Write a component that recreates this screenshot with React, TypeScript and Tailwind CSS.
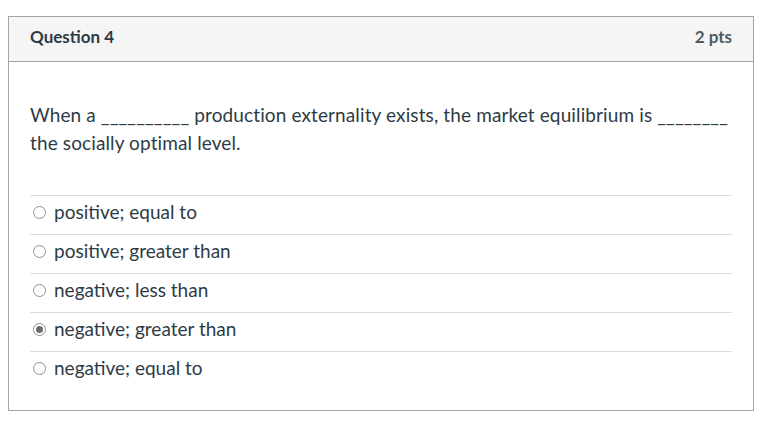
import React from "react";

const answers = [
  { label: "positive; equal to", checked: false },
  { label: "positive; greater than", checked: false },
  { label: "negative; less than", checked: false },
  { label: "negative; greater than", checked: true },
  { label: "negative; equal to", checked: false },
];

const Radio = ({ checked }: { checked: boolean }) => (
  <span className="w-[13px] h-[13px] rounded-full border border-[#909090] bg-white flex items-center justify-center shrink-0">
    {checked && <span className="w-[7px] h-[7px] rounded-full bg-[#6b6b6b]" />}
  </span>
);

export default function App() {
  return (
    <div className="w-[773px] h-[430px] bg-white pt-4 px-2 font-['Lato','Liberation_Sans',sans-serif] text-[#2d3b45]">
      <div className="w-[746px] h-[395px] border border-[#a5a5a5] flex flex-col">
        {/* Header */}
        <div className="h-[45px] bg-[#f5f5f5] border-b border-[#a5a5a5] flex items-center justify-between px-[21px] pb-[4px]">
          <h2 className="text-[17px] font-bold">Question 4</h2>
          <span className="text-[17px] font-bold text-[#4e5a63]">2 pts</span>
        </div>

        {/* Body */}
        <div className="px-[21px] pt-[39px]">
          <p className="text-[19px] leading-[28px] font-normal tracking-[0.12px] whitespace-nowrap">
            When a __________ production externality exists, the market equilibrium is ________
            <br />
            the socially optimal level.
          </p>

          <div className="mt-[38px]">
            {answers.map(a => (
              <div key={a.label} className="h-[39px] border-t border-[#dcdcdc] flex items-center gap-[8px] pl-[3px] pb-[5px]">
                <Radio checked={a.checked} />
                <span className="text-[19px]">{a.label}</span>
              </div>
            ))}
          </div>
        </div>
      </div>
    </div>
  );
}
